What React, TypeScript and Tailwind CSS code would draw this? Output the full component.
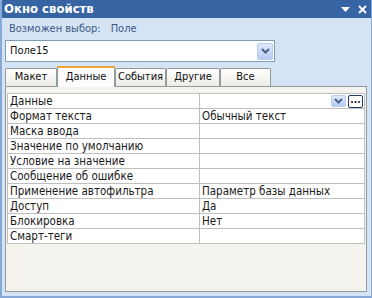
import React from "react";

const rows = [
  ["Данные", ""],
  ["Формат текста", "Обычный текст"],
  ["Маска ввода", ""],
  ["Значение по умолчанию", ""],
  ["Условие на значение", ""],
  ["Сообщение об ошибке", ""],
  ["Применение автофильтра", "Параметр базы данных"],
  ["Доступ", "Да"],
  ["Блокировка", "Нет"],
  ["Смарт-теги", ""],
];

const tabs = [
  { label: "Макет", w: "w-[52px]" },
  { label: "Данные", w: "w-[58px]", active: true },
  { label: "События", w: "w-[51px]" },
  { label: "Другие", w: "w-[54px]" },
  { label: "Все", w: "w-[51px]" },
];

const Chevron = () => (
  <svg width="9" height="6" viewBox="0 0 9 6">
    <path d="M1 1 L4.5 4.5 L8 1" stroke="#4d6185" strokeWidth="2" fill="none" />
  </svg>
);

const DropButton = ({ className }: any) => (
  <div
    className={`flex items-center justify-center rounded-[2px] border border-[#b9cdf2] bg-gradient-to-b from-[#dfe9fc] to-[#b7cbf3] ${className}`}
  >
    <Chevron />
  </div>
);

const Row = ({ name, value, first }: any) => (
  <div className="flex h-[15px] border-b border-[#c0c0c0] text-[11.5px]">
    <div className="w-[192px] shrink-0 border-r border-[#c0c0c0] pl-[2px] leading-[14px] text-[#1a1a1a]">
      {name}
    </div>
    <div className="relative flex-1 pl-[2px] leading-[14px] text-[#1a1a1a]">
      {value}
      {first && (
        <div className="absolute right-[1px] top-[1px] flex gap-[2px]">
          <DropButton className="h-[12px] w-[15px]" />
          <div className="flex h-[13px] w-[15px] items-center justify-center rounded-[2px] border border-[#1c3a6b] bg-white text-[10px] font-bold leading-[8px] pb-[3px]">
            ...
          </div>
        </div>
      )}
    </div>
  </div>
);

export default function App() {
  return (
    <div
      className="flex h-[298px] w-[372px] flex-col overflow-hidden border-l-2 border-r border-b-2 border-[#88a9d8] bg-[#d5e4f4] text-[11px]"
      style={{ fontFamily: "'DejaVu Sans Condensed', 'DejaVu Sans', sans-serif" }}
    >
      <div className="flex h-[18px] shrink-0 items-center bg-[#3764a2] pl-[2px] pr-[4px]">
        <span className="text-[13px] font-bold text-white">Окно свойств</span>
        <div className="ml-auto flex items-center gap-[8px]">
          <svg width="9" height="5" viewBox="0 0 9 5">
            <path d="M0 0 H9 L4.5 5 Z" fill="white" />
          </svg>
          <svg width="9" height="9" viewBox="0 0 9 9">
            <path d="M1 1 L8 8 M8 1 L1 8" stroke="white" strokeWidth="2" />
          </svg>
        </div>
      </div>

      <div className="flex flex-1 flex-col px-[3px]">
        <div className="mt-[3px] flex h-[16px] items-center pl-[4px] text-[#3b5886]">
          <span>Возможен выбор:</span>
          <span className="ml-[10px]">Поле</span>
        </div>

        <div className="mt-[3px] flex h-[22px] w-[270px] items-center border border-[#7f9db9] bg-white pl-[4px] pr-[1px] text-[#111]">
          <span>Поле15</span>
          <DropButton className="ml-auto h-[17px] w-[16px]" />
        </div>

        <div className="mt-[4px] flex h-[20px] items-end">
          {tabs.map((t) =>
            t.active ? (
              <div
                key={t.label}
                className={`${t.w} relative z-10 -mb-[1px] flex h-[21px] items-center justify-center border-x border-[#919b9c] border-t-2 border-t-[#f0a532] bg-[#fcfcfe] text-[#111]`}
              >
                {t.label}
              </div>
            ) : (
              <div
                key={t.label}
                className={`${t.w} flex h-[18px] items-center justify-center rounded-t-[2px] border border-b-0 border-[#919b9c] bg-gradient-to-b from-white to-[#ecebe5] text-[#111]`}
              >
                {t.label}
              </div>
            )
          )}
        </div>

        <div className="mb-[4px] mr-[1px] flex-1 border border-[#919b9c] bg-[#f4f3ee] px-[1px] pt-[6px]">
          <div className="border border-b-0 border-[#c0c0c0] bg-white">
            {rows.map((r, i) => (
              <Row key={r[0]} name={r[0]} value={r[1]} first={i === 0} />
            ))}
          </div>
        </div>
      </div>
    </div>
  );
}
